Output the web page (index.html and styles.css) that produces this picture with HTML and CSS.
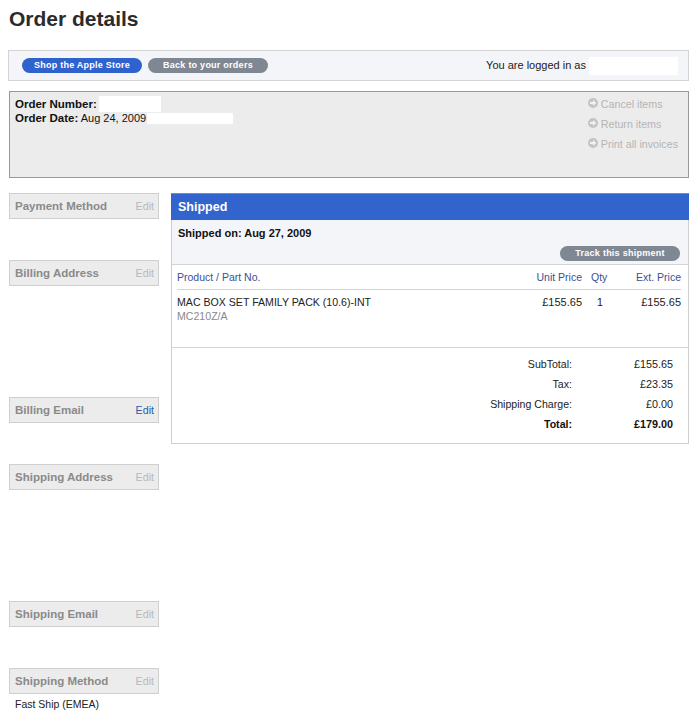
FILE: index.html
```html
<!DOCTYPE html>
<html lang="en">
<head>
<meta charset="utf-8">
<title>Order details</title>
<link rel="stylesheet" href="styles.css">
</head>
<body>
<h1 class="title">Order details</h1>
<div class="toolbar">
  <div class="buttons">
    <a class="pill pill-blue">Shop the Apple Store</a>
    <a class="pill pill-gray">Back to your orders</a>
  </div>
  <div class="login"><span class="login-text">You are logged in as</span><span class="mask mask-login"></span></div>
</div>
<div class="order">
  <div class="order-info">
    <div class="order-line"><b>Order Number:</b><span class="mask mask-number"></span></div>
    <div class="order-line"><b>Order Date:</b> Aug 24, 2009<span class="mask mask-date"></span></div>
  </div>
  <ul class="actions">
    <li><svg class="arrow" viewBox="0 0 10 10"><circle cx="5" cy="5" r="5" fill="#c4c4c4"/><path d="M2 4h3V2l3.2 3L5 8V6H2z" fill="#f2f2f2"/></svg>Cancel items</li>
    <li><svg class="arrow" viewBox="0 0 10 10"><circle cx="5" cy="5" r="5" fill="#c4c4c4"/><path d="M2 4h3V2l3.2 3L5 8V6H2z" fill="#f2f2f2"/></svg>Return items</li>
    <li><svg class="arrow" viewBox="0 0 10 10"><circle cx="5" cy="5" r="5" fill="#c4c4c4"/><path d="M2 4h3V2l3.2 3L5 8V6H2z" fill="#f2f2f2"/></svg>Print all invoices</li>
  </ul>
</div>
<div class="columns">
  <aside class="side">
    <section class="block block-s"><div class="block-head"><h2>Payment Method</h2><span class="edit">Edit</span></div></section>
    <section class="block block-l"><div class="block-head"><h2>Billing Address</h2><span class="edit">Edit</span></div></section>
    <section class="block block-s"><div class="block-head"><h2>Billing Email</h2><span class="edit edit-on">Edit</span></div></section>
    <section class="block block-l"><div class="block-head"><h2>Shipping Address</h2><span class="edit">Edit</span></div></section>
    <section class="block block-s"><div class="block-head"><h2>Shipping Email</h2><span class="edit">Edit</span></div></section>
    <section class="block"><div class="block-head"><h2>Shipping Method</h2><span class="edit">Edit</span></div><p class="block-text">Fast Ship (EMEA)</p></section>
  </aside>
  <main class="panel">
    <div class="panel-head">Shipped</div>
    <div class="ship-info">
      <div class="ship-date">Shipped on: Aug 27, 2009</div>
      <div class="track"><a class="pill pill-gray pill-track">Track this shipment</a></div>
    </div>
    <div class="items">
      <div class="row row-head">
        <div class="c-name">Product / Part No.</div>
        <div class="c-unit">Unit Price</div>
        <div class="c-qty">Qty</div>
        <div class="c-ext">Ext. Price</div>
      </div>
      <div class="row row-item">
        <div class="c-name">MAC BOX SET FAMILY PACK (10.6)-INT<div class="part">MC210Z/A</div></div>
        <div class="c-unit c-price">£155.65</div>
        <div class="c-qty c-qty-val">1</div>
        <div class="c-ext c-price">£155.65</div>
      </div>
    </div>
    <div class="totals">
      <div class="total"><span class="t-label">SubTotal:</span><span class="t-val">£155.65</span></div>
      <div class="total"><span class="t-label">Tax:</span><span class="t-val">£23.35</span></div>
      <div class="total"><span class="t-label">Shipping Charge:</span><span class="t-val">£0.00</span></div>
      <div class="total total-b"><span class="t-label">Total:</span><span class="t-val">£179.00</span></div>
    </div>
  </main>
</div>
</body>
</html>
```
FILE: styles.css
```css
* { box-sizing: border-box; }
html, body { margin: 0; background: #fff; }
body {
  width: 700px;
  height: 719px;
  overflow: hidden;
  padding: 0 11px 0 9px;
  font: 12px/14px "Liberation Sans", Arial, sans-serif;
  color: #222;
}
.title {
  margin: 0;
  padding-top: 5px;
  height: 50px;
  font-size: 21px;
  line-height: 28px;
  font-weight: bold;
  color: #2b2b2b;
}
.toolbar {
  height: 31px;
  margin-left: -1px;
  border: 1px solid #d3d3d3;
  background: #f4f5f8;
  display: flex;
  justify-content: space-between;
  align-items: center;
  padding: 0 10px 0 13px;
}
.buttons { display: flex; gap: 6px; }
.pill {
  display: block;
  width: 120px;
  height: 15px;
  border-radius: 8px;
  color: #fff;
  font-size: 9px;
  line-height: 14px;
  font-weight: bold;
  letter-spacing: 0.25px;
  text-align: center;
}
.pill-blue { background: #2f62cc; }
.pill-gray { background: #7f8793; }
.login { display: flex; align-items: center; font-size: 11px; }
.login-text { margin-top: -2px; }
.mask { display: block; background: #fff; }
.mask-login { width: 89px; height: 18px; margin-left: 3px; }
.order {
  height: 87px;
  margin-top: 10px;
  border: 1px solid #999;
  background: #ececec;
  display: flex;
  justify-content: space-between;
  padding: 5px 10px 0 5px;
  color: #111;
}
.order-line { display: flex; height: 14px; white-space: pre; font-size: 11px; line-height: 14px; }
.order-line b { font-size: 11.5px; }
.mask-number { width: 62px; height: 16px; margin: -1px 0 0 2px; }
.mask-date { width: 86px; height: 11px; margin: 2px 0 0 1px; }
.actions { list-style: none; margin: 0; padding: 0; color: #b5b5b5; font-size: 10.7px; }
.actions li { height: 20px; line-height: 14px; display: flex; align-items: flex-start; gap: 3px; }
.arrow { width: 10px; height: 10px; margin-top: 1px; }
.columns { display: flex; gap: 12px; margin-top: 15px; align-items: flex-start; }
.side { width: 150px; flex: none; }
.block-head {
  height: 26px;
  border: 1px solid #cfcfcf;
  background: #ececec;
  display: flex;
  justify-content: space-between;
  align-items: center;
  padding: 0 4px 0 5px;
}
.block-s { height: 67px; }
.block-l { height: 137px; }
.block-head h2 { margin: 0; font-size: 11.5px; font-weight: bold; color: #8a8a8a; }
.edit { font-size: 10.7px; color: #b8b8b8; }
.edit-on { color: #2f5aa8; }
.block-text { margin: 4px 0 0 6px; font-size: 10.5px; line-height: 13px; color: #222; }
.panel { width: 518px; height: 251px; border: 1px solid #cfcfcf; border-top: 0; }
.panel-head {
  height: 27px;
  margin: 0 -1px;
  padding: 0 7px;
  background: #3164cc;
  border-top: 1px solid #6f8fb8;
  color: #fff;
  font-size: 12.5px;
  font-weight: bold;
  line-height: 27px;
}
.ship-info { height: 45px; background: #f4f5f8; border-bottom: 1px solid #d3d3d3; padding: 6px 6px 0; }
.ship-date { font-weight: bold; font-size: 11px; line-height: 14px; color: #111; }
.track { display: flex; justify-content: flex-end; margin-top: 6px; padding-right: 2px; }
.items { height: 83px; padding: 0 7px 0 5px; border-bottom: 1px solid #d3d3d3; }
.row { display: flex; }
.row-head { height: 25px; border-bottom: 1px solid #d3d3d3; padding-top: 5px; color: #3c4f93; font-size: 10.5px; line-height: 14px; }
.row-item { padding-top: 5px; font-size: 10.6px; line-height: 14px; color: #222; }
.c-name { flex: 1; }
.c-unit { width: 60px; text-align: right; }
.c-qty { width: 36px; padding-left: 9px; }
.c-qty-val { padding-left: 15px; }
.c-ext { width: 63px; text-align: right; }
.c-price { font-size: 11px; }
.part { color: #8a8a8a; }
.totals { padding-top: 9px; }
.total { height: 20px; display: flex; justify-content: flex-end; padding-right: 15px; font-size: 10.6px; line-height: 14px; color: #222; }
.t-label { text-align: right; }
.t-val { width: 101px; text-align: right; font-size: 10.8px; }
.total-b { font-weight: bold; color: #111; }
```
